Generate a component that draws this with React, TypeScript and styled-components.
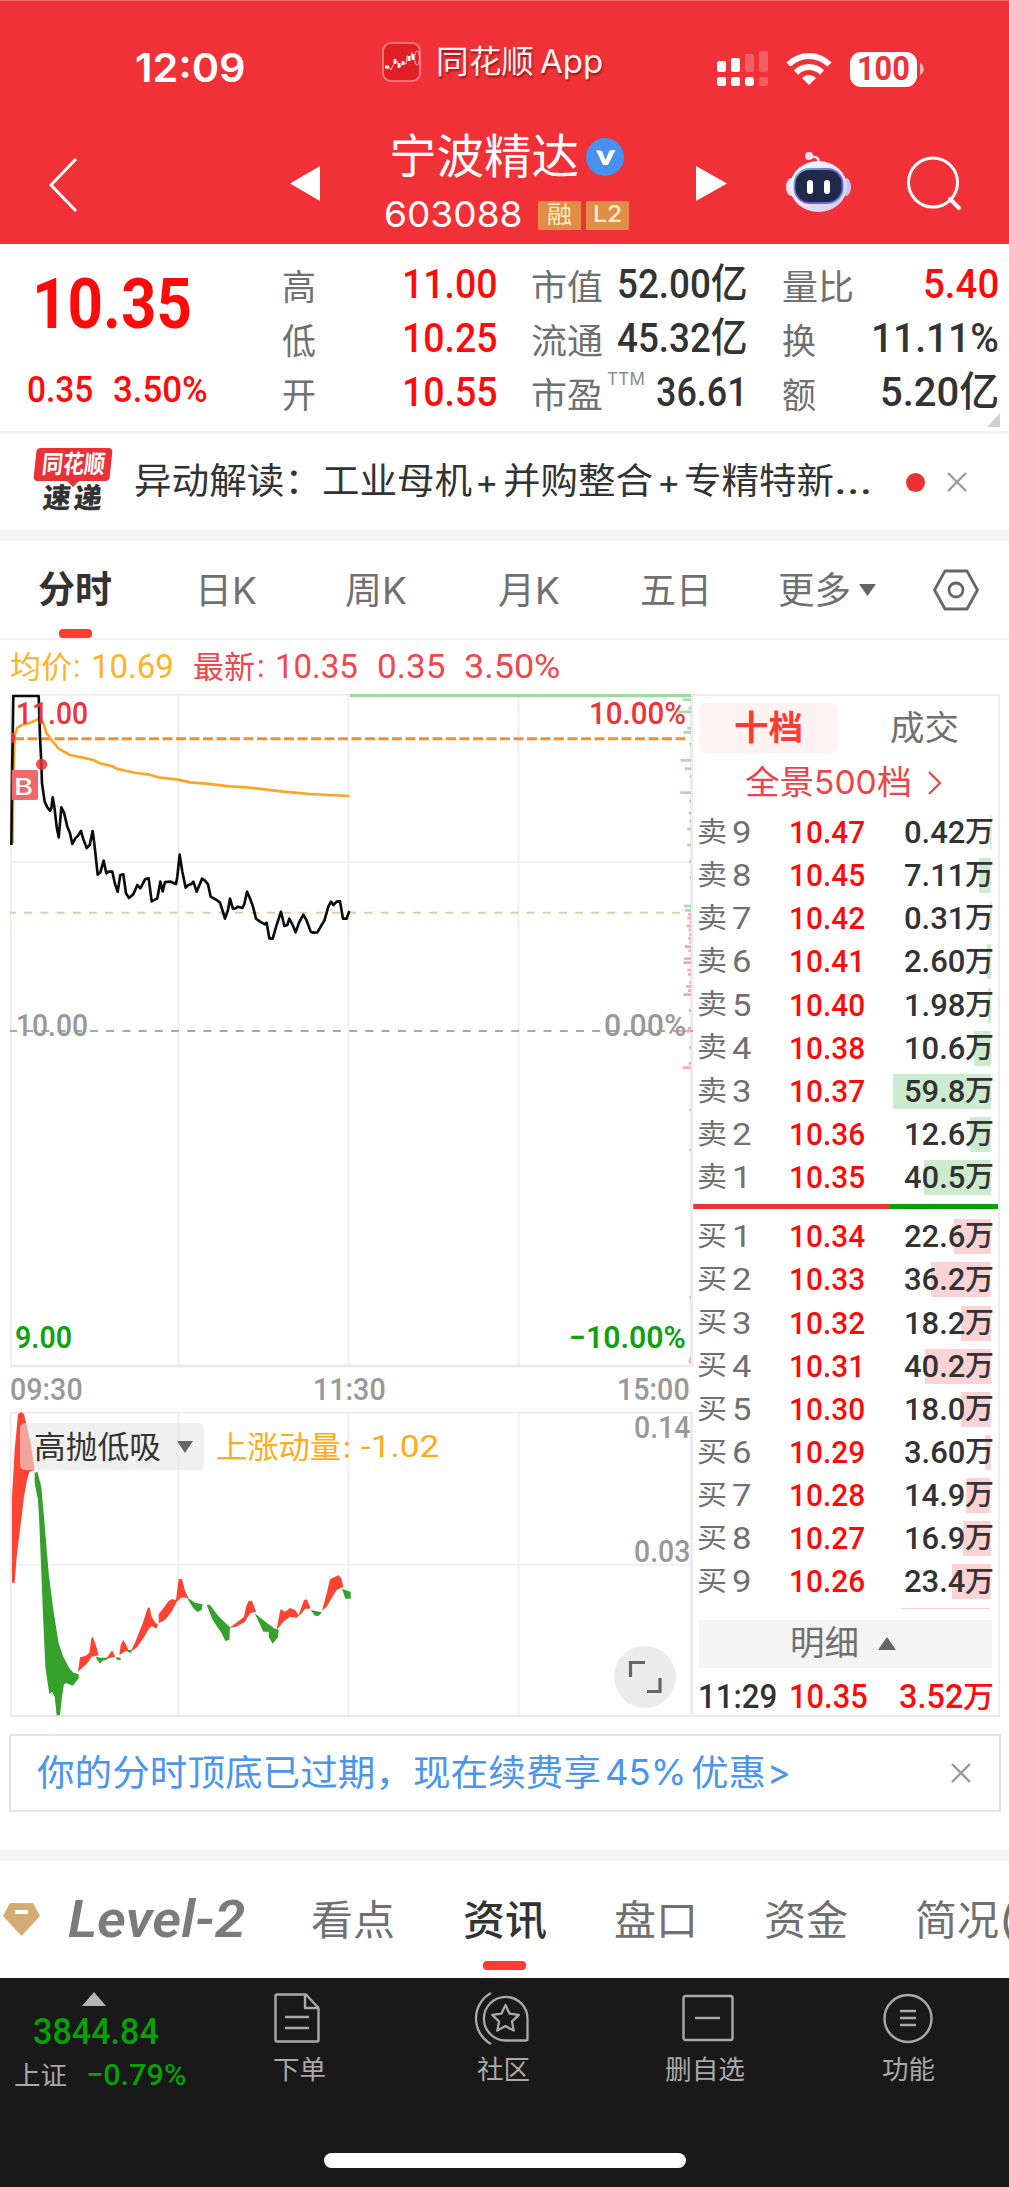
import React, { useLayoutEffect, useRef, useState } from 'react';
import styled, { createGlobalStyle, css } from 'styled-components';

const NUM = 'Roboto, "Noto Sans CJK SC", sans-serif';
const SANS = 'Inter, "Noto Sans CJK SC", sans-serif';

const RED = '#ff0a0a';
const GRAY = '#707070';
const INK = '#333333';

const Global = createGlobalStyle`
  * { box-sizing: border-box; }
  body { margin: 0; background: #fff; font-family: ${SANS}; color: ${INK}; }
`;

/* ---------- text that is condensed or widened to a column width ---------- */

const FitBox = styled.span<{ $w: number; $size: number; $color?: string; $weight?: number; $num?: boolean; $ml?: number; $dy?: number }>`
  display: block;
  flex: none;
  width: ${p => p.$w}px;
  margin-left: ${p => p.$ml ?? 0}px;
  padding-top: ${p => Math.max(0, (p.$dy ?? 0) * 2)}px;
  padding-bottom: ${p => Math.max(0, -(p.$dy ?? 0) * 2)}px;
  font-family: ${p => (p.$num ? NUM : SANS)};
  font-size: ${p => p.$size}px;
  font-weight: ${p => p.$weight ?? 400};
  color: ${p => p.$color ?? 'inherit'};
  line-height: 1.2;
  white-space: nowrap;
`;
const FitInner = styled.span`
  display: inline-block;
  transform-origin: left center;
  line-height: inherit;
  vertical-align: top;
`;

type FitProps = { w: number; size: number; color?: string; weight?: number; num?: boolean; ml?: number; dy?: number; children: React.ReactNode };

function Fit({ w, size, color, weight, num, ml, dy, children }: FitProps) {
  const ref = useRef<HTMLSpanElement>(null);
  const [scale, setScale] = useState(1);
  useLayoutEffect(() => {
    if (ref.current) setScale(w / ref.current.offsetWidth);
  }, [w, size, children]);
  return (
    <FitBox $w={w} $size={size} $color={color} $weight={weight} $num={num} $ml={ml} $dy={dy}>
      <FitInner ref={ref} style={{ transform: `scaleX(${scale})` }}>{children}</FitInner>
    </FitBox>
  );
}

/* ---------- page ---------- */

const Page = styled.div`
  width: 1009px;
  height: 2187px;
  overflow: hidden;
  background: #fff;
  display: flex;
  flex-direction: column;
`;
const Row = styled.div<{ $h?: number; $pl?: number }>`
  display: flex;
  align-items: center;
  flex: none;
  ${p => p.$h && css`height: ${p.$h}px;`}
  padding-left: ${p => p.$pl ?? 0}px;
`;
const Icon = styled.svg<{ $ml?: number; $mt?: number }>`
  display: block;
  flex: none;
  overflow: visible;
  margin-left: ${p => p.$ml ?? 0}px;
  margin-top: ${p => p.$mt ?? 0}px;
`;
const Band = styled.div<{ $h: number }>`
  flex: none;
  height: ${p => p.$h}px;
  background: #f4f4f4;
`;

/* ---------- header ---------- */

const Header = styled.header`
  flex: none;
  height: 244px;
  background: #f03138;
  color: #fff;
  border-top: 1px solid #f4686c;
`;
const StatusBar = styled(Row)`
  height: 134px;
  padding-top: 2px;
`;
const AppMark = styled(Row)`
  margin-left: 136px;
  padding-bottom: 14px;
  text-shadow: 1px 2px 2px rgba(90, 0, 0, 0.6);
`;
const Battery = styled.div`
  display: flex;
  align-items: center;
  justify-content: center;
  width: 67px;
  height: 35px;
  margin-left: 18px;
  border-radius: 11px;
  background: #fff;
`;
const NavBar = styled.div`
  display: flex;
  height: 109px;
`;
const NavIcon = styled.div<{ $w: number }>`
  flex: none;
  width: ${p => p.$w}px;
`;
const Title = styled.div`
  width: 262px;
  flex: none;
`;
const Tag = styled.span<{ $ml: number }>`
  display: flex;
  justify-content: center;
  align-items: center;
  width: 43px;
  height: 29px;
  margin-left: ${p => p.$ml}px;
  background: #e28d46;
  color: #fdeec8;
`;

function HeaderView() {
  return (
    <Header>
      <StatusBar>
        <Fit w={111} size={40} weight={600} ml={135} dy={-1}>12:09</Fit>
        <AppMark>
          <Icon width="39" height="41" viewBox="0 0 39 41">
            <rect x="1" y="1" width="37" height="38" rx="8" fill="#e01f26" stroke="#f7868a" strokeWidth="1.6" />
            <path d="M4 26l3-1 2 3 2-5 4-4 3 6 3-4 3 1 1-8 4 1 1-5" fill="none" stroke="#f9b6b6" strokeWidth="1" />
            <path d="M3 25h4M13 17v5M17 21v5M21 19v4M27 14v5M31 12v6" stroke="#fff" strokeWidth="2.8" />
            <ellipse cx="35" cy="16" rx="2.4" ry="7" fill="none" stroke="#f9b6b6" />
          </Icon>
          <Fit w={98} size={32} ml={15} color="#fff3f0">同花顺</Fit>
          <Fit w={63} size={32} ml={6} color="#fff3f0">App</Fit>
        </AppMark>
        <Icon $ml={114} width="52" height="36" viewBox="0 0 52 36" fill="#fff">
          <rect x="0" y="10" width="9" height="11" rx="2" />
          <rect x="14" y="7" width="9" height="14" rx="2" />
          <rect x="28" y="3" width="9" height="18" rx="2" opacity=".22" />
          <rect x="42" y="0" width="9" height="21" rx="2" opacity=".22" />
          <rect x="0" y="26" width="9" height="9" rx="2" />
          <rect x="14" y="26" width="9" height="9" rx="2" />
          <rect x="28" y="26" width="9" height="9" rx="3" />
          <rect x="42" y="26" width="9" height="9" rx="2" opacity=".22" />
        </Icon>
        <Icon $ml={17} width="46" height="34" viewBox="0 0 46 34" fill="none" stroke="#fff" strokeWidth="6">
          <path d="M2.500 12.500C14 1 32 1 43.500 12.500" />
          <path d="M10 20.500C17.500 13.200 28.500 13.200 36 20.500" />
          <path d="M16 26c4-4 10-4 14 0l-7 7z" fill="#fff" stroke="none" />
        </Icon>
        <Battery><Fit w={53} size={33} weight={700} num color="#f03138">100</Fit></Battery>
        <Icon $ml={3} width="4" height="12" viewBox="0 0 4 12"><path d="M0 0c5 2 5 10 0 12z" fill="#fbb9bb" /></Icon>
      </StatusBar>
      <NavBar>
        <NavIcon $w={290}>
          <Icon $ml={49} $mt={23} width="29" height="54" viewBox="0 0 29 54"><path d="M27 1L2 27l25 26" fill="none" stroke="#fff" strokeWidth="3" /></Icon>
        </NavIcon>
        <NavIcon $w={94}>
          <Icon $mt={31} width="30" height="35" viewBox="0 0 30 35"><path d="M30 0v35L0 17.500z" fill="#fff" /></Icon>
        </NavIcon>
        <Title>
          <Row $h={44} $pl={5}>
            <Fit w={190} size={47} dy={-1}>宁波精达</Fit>
            <Icon $ml={7} width="38" height="38" viewBox="0 0 38 38">
              <circle cx="19" cy="19" r="19" fill="#4792ee" />
              <path d="M10 12l6 1 3.500 9 4-9.500 6-.5-7.500 15h-5z" fill="#fff" />
            </Icon>
          </Row>
          <Row $h={72} $pl={0}>
            <Fit w={139} size={36} dy={0}>603088</Fit>
            <Tag $ml={15}><Fit w={25} size={24}>融</Fit></Tag>
            <Tag $ml={5}><Fit w={29} size={23} weight={500}>L2</Fit></Tag>
          </Row>
        </Title>
        <NavIcon $w={140}>
          <Icon $ml={50} $mt={31} width="31" height="35" viewBox="0 0 31 35"><path d="M0 0v35L31 17.500z" fill="#fff" /></Icon>
        </NavIcon>
        <NavIcon $w={121}>
          <Icon $mt={17} width="65" height="62" viewBox="0 0 65 62">
            <defs>
              <linearGradient id="shell" x1="0" y1="0" x2="1" y2="1"><stop offset="0" stopColor="#fff" /><stop offset="1" stopColor="#cfcbf0" /></linearGradient>
              <linearGradient id="rim" x1="0" y1="0" x2="1" y2="1"><stop offset="0" stopColor="#5fc0d8" /><stop offset=".6" stopColor="#8546d8" /><stop offset="1" stopColor="#5b8af0" /></linearGradient>
            </defs>
            <path d="M24 5c8-1 9 2 9 7" fill="none" stroke="#e3dcf4" strokeWidth="2.500" />
            <circle cx="23" cy="4" r="4" fill="#e9e4f8" />
            <ellipse cx="5" cy="35" rx="5" ry="9" fill="#e6e3f7" />
            <ellipse cx="60" cy="35" rx="5" ry="9" fill="#c8c5ec" />
            <ellipse cx="32.500" cy="34.500" rx="28.500" ry="25.500" fill="url(#shell)" />
            <rect x="8.500" y="17" width="48" height="34" rx="15" fill="#1f2a4a" stroke="url(#rim)" strokeWidth="1.800" />
            <rect x="21" y="28" width="6" height="14" rx="3" fill="#fff" />
            <rect x="38" y="28" width="6" height="14" rx="3" fill="#fff" />
          </Icon>
        </NavIcon>
        <Icon $mt={21} width="56" height="56" viewBox="0 0 56 56" fill="none" stroke="#fff" strokeWidth="3">
          <circle cx="26" cy="26.500" r="24.500" /><path d="M43 43l9 9" strokeWidth="4" strokeLinecap="round" />
        </Icon>
      </NavBar>
    </Header>
  );
}

/* ---------- quote ---------- */

const Quote = styled.section`
  flex: none;
  display: flex;
  height: 190px;
  border-bottom: 3px solid #f3f3f3;
`;
const PriceCol = styled.div`
  width: 282px;
  padding: 19px 0 0 27px;
`;
const StatCol = styled.div<{ $w: number; $mr: number }>`
  flex: none;
  width: ${p => p.$w}px;
  margin-right: ${p => p.$mr}px;
  padding-top: 15px;
`;
const StatRow = styled.div`
  display: flex;
  justify-content: space-between;
  align-items: center;
  height: 54px;
`;
const Superscript = styled.span`
  flex: 1;
  align-self: flex-start;
  padding: 4px 0 0 4px;
  font-size: 17px;
  line-height: 17px;
  color: #8a8a8a;
  letter-spacing: 0.3px;
`;
const Corner = styled.div`
  align-self: flex-end;
  margin: 0 0 4px -12px;
  border-left: 13px solid transparent;
  border-bottom: 14px solid #cfcfcf;
`;

type Stat = { label: string; lw: number; value: string; vw: number; color?: string; sup?: string };
const statCols: { w: number; mr: number; rows: Stat[] }[] = [
  { w: 216, mr: 33, rows: [
    { label: '高', lw: 34, value: '11.00', vw: 96, color: RED },
    { label: '低', lw: 34, value: '10.25', vw: 96, color: RED },
    { label: '开', lw: 34, value: '10.55', vw: 96, color: RED } ] },
  { w: 217, mr: 34, rows: [
    { label: '市值', lw: 72, value: '52.00亿', vw: 131 },
    { label: '流通', lw: 72, value: '45.32亿', vw: 131 },
    { label: '市盈', lw: 72, value: '36.61', vw: 92, sup: 'TTM' } ] },
  { w: 217, mr: 0, rows: [
    { label: '量比', lw: 72, value: '5.40', vw: 76, color: RED },
    { label: '换', lw: 34, value: '11.11%', vw: 128 },
    { label: '额', lw: 34, value: '5.20亿', vw: 119 } ] },
];

function QuoteView() {
  return (
    <Quote>
      <PriceCol>
        <Row $h={82} $pl={5}><Fit w={160} size={70} weight={700} num color={RED}>10.35</Fit></Row>
        <Row $h={90}>
          <Fit w={66} size={37} weight={500} num color={RED}>0.35</Fit>
          <Fit w={95} size={37} weight={500} num color={RED} ml={20}>3.50%</Fit>
        </Row>
      </PriceCol>
      {statCols.map((c, i) => (
        <StatCol key={i} $w={c.w} $mr={c.mr}>
          {c.rows.map(r => (
            <StatRow key={r.label}>
              <Fit w={r.lw} size={35} color={GRAY} dy={1}>{r.label}</Fit>
              {r.sup && <Superscript>{r.sup}</Superscript>}
              <Fit w={r.vw} size={41} weight={500} num color={r.color ?? INK} dy={-1}>{r.value}</Fit>
            </StatRow>
          ))}
        </StatCol>
      ))}
      <Corner />
    </Quote>
  );
}

/* ---------- news ---------- */

const News = styled(Row)`
  height: 96px;
`;
const Badge = styled.div`
  display: flex;
  flex-direction: column;
  align-items: center;
  width: 80px;
  height: 68px;
  margin: 0 21px 0 33px;
`;
const BadgeTop = styled.div`
  display: flex;
  justify-content: center;
  width: 76px;
  height: 34px;
  padding-top: 1px;
  border-radius: 4px;
  background: #ea3135;
  transform: skewX(-6deg);
`;
const BadgeTip = styled.div`
  border: 6px solid transparent;
  border-bottom: 0;
  border-top-color: #ea3135;
`;
const BadgeBottom = styled.div`
  display: flex;
  gap: 3px;
  margin: -5px 0 0 -2px;
  transform: skewX(-6deg);
`;
const Dot = styled.i`
  flex: none;
  width: 19px;
  height: 19px;
  margin-left: 34px;
  border-radius: 50%;
  background: #ee3135;
`;

const Cross = ({ ml }: { ml: number }) => (
  <Icon $ml={ml} width="20" height="20" viewBox="0 0 20 20"><path d="M1 1l18 18M19 1L1 19" stroke="#999" strokeWidth="2.400" /></Icon>
);

function NewsView() {
  return (
    <News>
      <Badge>
        <BadgeTop><Fit w={63} size={25} weight={700} color="#fff">同花顺</Fit></BadgeTop>
        <BadgeTip />
        <BadgeBottom>
          <Fit w={28} size={28} weight={900}>速</Fit>
          <Fit w={28} size={28} weight={900}>递</Fit>
        </BadgeBottom>
      </Badge>
      <Fit w={188} size={36}>异动解读：</Fit>
      <Fit w={150} size={36}>工业母机</Fit>
      <Fit w={24} size={34} ml={3}>+</Fit>
      <Fit w={150} size={36} ml={4}>并购整合</Fit>
      <Fit w={24} size={34} ml={4}>+</Fit>
      <Fit w={150} size={36} ml={3}>专精特新</Fit>
      <Fit w={38} size={36}>...</Fit>
      <Dot />
      <Cross ml={22} />
    </News>
  );
}

/* ---------- period tabs ---------- */

const Tabs = styled.nav<{ $h: number; $cols: string; $border?: boolean }>`
  flex: none;
  display: grid;
  grid-template-columns: ${p => p.$cols};
  height: ${p => p.$h}px;
  ${p => p.$border && css`border-bottom: 2px solid #f1f1f1;`}
`;
const Tab = styled.div<{ $top: number }>`
  display: flex;
  padding-top: ${p => p.$top}px;
`;
const ActiveTab = styled.div<{ $top: number }>`
  display: flex;
  flex-direction: column;
  justify-content: space-between;
  padding-top: ${p => p.$top}px;
`;
const Underline = styled.i<{ $ml: number; $w: number; $mb?: number }>`
  width: ${p => p.$w}px;
  height: 9px;
  margin: 0 0 ${p => p.$mb ?? 0}px ${p => p.$ml}px;
  border-radius: 4px;
  background: #ff3b32;
`;

function PeriodTabs() {
  return (
    <Tabs $h={99} $cols="195px 150px 153px 142px 138px 155px 1fr" $border>
      <ActiveTab $top={27}>
        <Fit w={74} size={37} weight={700} ml={38}>分时</Fit>
        <Underline $ml={59} $w={33} />
      </ActiveTab>
      {['日K', '周K', '月K'].map(t => <Tab key={t} $top={28}><Fit w={62} size={37} color={GRAY}>{t}</Fit></Tab>)}
      <Tab $top={28}><Fit w={72} size={37} color={GRAY}>五日</Fit></Tab>
      <Tab $top={28}>
        <Fit w={73} size={37} color={GRAY}>更多</Fit>
        <Icon $ml={8} $mt={15} width="17" height="12" viewBox="0 0 17 12"><path d="M0 0h17L8.500 12z" fill="#666" /></Icon>
      </Tab>
      <Tab $top={28}>
        <Icon width="46" height="42" viewBox="0 0 46 42" fill="none" stroke="#666" strokeWidth="2.800">
          <path d="M12 2h22l10.500 19L34 40H12L1.500 21z" strokeLinejoin="round" /><circle cx="23" cy="21" r="7" />
        </Icon>
      </Tab>
    </Tabs>
  );
}

/* ---------- chart column ---------- */

const Summary = styled(Row)`
  height: 54px;
  padding-left: 10px;
  color: #f0474c;
`;
const Market = styled.main`
  flex: none;
  display: flex;
  height: 1023px;
  padding-left: 10px;
`;
const ChartCol = styled.div`
  width: 683px;
  flex: none;
`;
const Plot = styled.div<{ $h: number }>`
  position: relative;
  height: ${p => p.$h}px;
`;
const PlotText = styled.div<{ $x?: number; $right?: number; $y: number }>`
  position: absolute;
  top: ${p => p.$y}px;
  ${p => (p.$right !== undefined ? css`right: ${p.$right}px;` : css`left: ${p.$x}px;`)}
`;
const Axis = styled.div`
  display: flex;
  justify-content: space-between;
  align-items: center;
  height: 45px;
  padding: 0 3px 0 0;
  color: #999;
`;
const Chip = styled.div`
  position: absolute;
  left: 10px;
  top: 11px;
  display: flex;
  align-items: center;
  width: 184px;
  height: 47px;
  padding-left: 14px;
  border-radius: 5px;
  background: rgba(230, 230, 230, 0.6);
`;
const Expand = styled.div`
  position: absolute;
  right: 17px;
  top: 234px;
  display: flex;
  align-items: center;
  justify-content: center;
  width: 62px;
  height: 62px;
  border-radius: 50%;
  background: #ececec;
`;

const pricePts = '34,495 36,300 40,48 116,48 120,170 124,250 126,310 134,365 142,382 150,392 154,385 158,352 163,380 170,440 176,472 180,430 184,382 192,398 202,440 210,460 217,492 226,475 234,467 243,453 250,478 260,504 269,495 278,453 284,500 293,584 301,577 311,542 319,580 326,575 337,575 345,612 353,635 361,585 370,583 378,640 387,654 400,643 412,615 421,625 436,597 446,595 455,664 472,655 481,605 488,634 495,606 512,605 528,612 532,590 539,524 547,575 557,623 565,615 573,613 580,605 590,635 606,596 615,602 624,613 632,650 650,660 660,668 667,690 675,716 684,690 690,656 699,687 707,685 714,680 727,684 733,672 741,635 750,655 759,680 768,716 780,725 795,733 800,728 808,775 818,776 830,735 843,695 853,738 862,735 868,716 878,735 887,757 897,728 910,704 920,722 932,755 940,758 952,757 965,735 973,722 985,680 993,665 1000,675 1010,665 1020,664 1029,716 1040,716 1048,693';
const averagePts = '38,490 40,300 44,165 52,143 66,135 90,128 110,120 120,112 130,130 140,160 155,180 175,205 210,225 245,232 280,240 300,250 335,258 350,266 380,273 410,279 445,283 480,293 535,299 570,307 620,311 690,319 740,322 800,329 850,335 930,342 1048,348';

const asks: [number, number][] = [[59, 1028], [85, 1045], [96, 1015], [145, 1042], [157, 1030], [193, 1048], [241, 1022], [266, 1034], [290, 1049], [338, 1021], [363, 1047], [399, 1046], [424, 1049], [447, 1042], [495, 1042], [545, 1047], [593, 1050], [678, 1032], [691, 1034]];
const bids: [number, number][] = [[703, 1045], [714, 1042], [726, 1048], [738, 1040], [750, 1046], [763, 1048], [775, 1045], [787, 1048], [800, 1034], [812, 1045], [836, 1032], [848, 1030], [870, 1042], [883, 1044], [907, 1048], [919, 1038], [932, 1044], [944, 1030], [992, 1046], [1045, 1044], [1053, 1015], [1102, 1048], [1150, 1046], [1163, 1028], [1290, 1049], [1410, 1049], [1852, 1049], [2036, 1048], [2045, 1046]];

const rising = [
  '36,878 36,620 44,480 54,372 64,366 72,372 80,405 94,470 104,540 88,545 80,575 72,620 60,720 50,800 44,878',
  '234,1145 240,1102 256,1098 268,1088 274,1045 278,1040 286,1060 292,1080 296,1096 275,1100 262,1120',
  '318,1108 330,1090 336,1081 346,1100 330,1103',
  '358,1095 362,1065 370,1049 380,1068 386,1082 372,1086',
  '392,1084 404,1060 416,1030 428,1000 436,975 444,952 450,955 454,978 464,995 474,1005 470,1016 455,1008 446,1018 430,1045 412,1070 400,1080',
  '476,1000 476,972 490,955 504,935 515,927 528,930 536,866 546,868 556,905 566,925 545,922 530,935 515,965 495,990',
  '688,1014 712,996 732,980 738,950 746,932 756,932 768,965 750,970 735,995 708,1010',
  '830,1020 836,985 842,957 855,965 870,954 885,960 896,975 912,930 920,928 932,955 915,957 905,970 890,983 870,980 850,995',
  '966,962 980,910 990,868 1005,860 1016,856 1024,865 1030,890 1010,900 995,925 980,950',
];
const falling = [
  '104,548 112,545 124,590 132,680 146,850 160,960 176,1060 190,1100 208,1135 220,1148 236,1152 236,1165 218,1187 200,1180 192,1182 186,1220 180,1276 170,1276 164,1220 156,1205 148,1213 136,1130 128,950 118,700 114,630 104,580',
  '288,1100 300,1103 328,1103 318,1110 308,1112 300,1121 290,1108',
  '348,1102 362,1103 362,1110 350,1109',
  '382,1080 396,1080 394,1088 384,1087',
  '560,922 585,938 608,943 605,960 592,966 580,955',
  '620,944 630,945 655,978 690,1012 688,1050 676,1053 665,1030 650,1008 638,990',
  '764,970 800,998 822,1015 836,1020 834,1042 818,1061 806,1040 806,1025 790,1025',
  '932,960 966,967 955,978 945,977',
  '1026,896 1052,906 1052,926 1036,926',
];

function PricePlot() {
  return (
    <Plot $h={673}>
      <Icon width="683" height="673" viewBox="0 0 683 673" fill="none">
        <path d="M168.500 0v673M338.500 0v673M508.500 0v673M0 168h683" stroke="#f0f0f0" strokeWidth="2" />
        <path d="M.75 0v673M0 .75h683" stroke="#ebebeb" strokeWidth="1.500" />
        <path d="M0 672h683" stroke="#e8e8e8" strokeWidth="2.500" />
        <path d="M681.500 0v673" stroke="#ececec" strokeWidth="3.500" />
        <path d="M0 337h683" stroke="#a8a8a8" strokeWidth="1.800" strokeDasharray="8 8.200" strokeDashoffset="1" />
        <path d="M0 218.700h672" stroke="#e6cba6" strokeWidth="1.900" strokeDasharray="8 8.200" strokeDashoffset="2" />
        <path d="M4 44.800h674" stroke="#fb8c2c" strokeWidth="3" strokeDasharray="10 3.500" />
        <path d="M340 1.700h341" stroke="#9fdaa2" strokeWidth="3.200" />
        <g transform="translate(330 -14) scale(.33333)" strokeWidth="8">
          {asks.map(([y, x]) => <path key={y} d={`M${x} ${y}H1053`} stroke="#a5dca8" />)}
          {bids.map(([y, x]) => <path key={y} d={`M${x} ${y}H1053`} stroke="#f9a9ab" />)}
        </g>
        <g transform="translate(-10 -14) scale(.33333)" strokeLinejoin="round">
          <polyline points={averagePts} stroke="#fda326" strokeWidth="8" />
          <polyline points={pricePts} stroke="#0c0c0c" strokeWidth="8" />
          <path d="M35 270h74q5 0 5 5v79q0 6-6 6H35z" fill="#f0686a" />
          <circle cx="125" cy="253" r="17" fill="#e8343a" opacity=".85" />
          <path d="M34 155q12 2 12 18t-12 16z" fill="#e8343a" />
        </g>
      </Icon>
      <PlotText $x={4} $y={80}><Fit w={19} size={23} weight={500} color="#fff">B</Fit></PlotText>
      <PlotText $x={6} $y={1}><Fit w={72} size={31} weight={500} num color="#ee3439">11.00</Fit></PlotText>
      <PlotText $right={7} $y={1}><Fit w={97} size={31} weight={500} num color="#ee3439">10.00%</Fit></PlotText>
      <PlotText $x={6} $y={313}><Fit w={72} size={31} weight={500} num color="#999">10.00</Fit></PlotText>
      <PlotText $right={7} $y={313}><Fit w={82} size={31} weight={500} num color="#999">0.00%</Fit></PlotText>
      <PlotText $x={5} $y={625}><Fit w={57} size={31} weight={600} num color="#12a012">9.00</Fit></PlotText>
      <PlotText $right={7} $y={625}><Fit w={117} size={31} weight={600} num color="#12a012">−10.00%</Fit></PlotText>
    </Plot>
  );
}

function MomentumPlot() {
  return (
    <Plot $h={305}>
      <Icon width="683" height="305" viewBox="0 0 683 305" fill="none">
        <path d="M168.500 0v305M338.500 0v305M508.500 0v305M0 152.700h683" stroke="#f0f0f0" strokeWidth="2" />
        <path d="M.75 0v305M0 .75h683" stroke="#ebebeb" strokeWidth="1.500" />
        <path d="M0 304h683" stroke="#e8e8e8" strokeWidth="2" />
        <path d="M681.500 0v305" stroke="#ececec" strokeWidth="3.500" />
        <g transform="translate(-10 -122) scale(.33333)">
          {rising.map(p => <polygon key={p} points={p} fill="#ff4433" />)}
          {falling.map(p => <polygon key={p} points={p} fill="#35a02b" />)}
        </g>
      </Icon>
      <Chip>
        <Fit w={127} size={31} color={INK}>高抛低吸</Fit>
        <Icon $ml={16} width="16" height="12" viewBox="0 0 16 12"><path d="M0 0h16L8 12z" fill="#666" /></Icon>
      </Chip>
      <PlotText $x={206} $y={15}><Row>
        <Fit w={125} size={31} color="#fdab1e">上涨动量</Fit>
        <Fit w={8} size={31} ml={2} color="#fdab1e">:</Fit>
        <Fit w={78} size={32} ml={10} num color="#fdab1e">-1.02</Fit>
      </Row></PlotText>
      <PlotText $right={3} $y={-3}><Fit w={56} size={31} weight={500} num color="#999">0.14</Fit></PlotText>
      <PlotText $right={3} $y={121}><Fit w={56} size={31} weight={500} num color="#999">0.03</Fit></PlotText>
      <Expand>
        <Icon width="34" height="34" viewBox="0 0 34 34" fill="none" stroke="#666" strokeWidth="3.200"><path d="M2.500 17V2.500H17M19 31.500h13V18" /></Icon>
      </Expand>
    </Plot>
  );
}

/* ---------- order book ---------- */

const Book = styled.aside`
  flex: none;
  width: 307px;
  height: 1023px;
  border-top: 2px solid #ededed;
  border-right: 2px solid #ededed;
  border-bottom: 2px solid #e8e8e8;
`;
const BookTabs = styled.div`
  display: flex;
  height: 58px;
  padding: 7px 0 0 6px;
`;
const BookTab = styled.div<{ $active?: boolean }>`
  display: flex;
  flex: none;
  align-items: center;
  justify-content: center;
  width: ${p => (p.$active ? 139 : 160)}px;
  height: 50px;
  padding-left: ${p => (p.$active ? 0 : 12)}px;
  border-radius: 6px;
  background: ${p => (p.$active ? '#fff2f2' : 'none')};
`;
const Levels = styled.div<{ $mt: number }>`
  margin-top: ${p => p.$mt}px;
`;
const Level = styled.div`
  display: grid;
  grid-template-columns: 35px 57px 1fr 105px;
  align-items: center;
  height: 43.15px;
  padding-left: 4px;
`;
const Volume = styled.div<{ $bar: number; $tint: string }>`
  height: 35px;
  display: flex;
  align-items: center;
  justify-content: flex-end;
  padding-right: 4px;
  background: linear-gradient(${p => p.$tint}, ${p => p.$tint}) no-repeat right 7px top 0 / ${p => p.$bar}px 35px;
`;
const Ratio = styled.div`
  height: 5px;
  margin-top: 5px;
  background: linear-gradient(90deg, #ef3438 197px, #06a006 197px);
`;
const Leftover = styled.div`
  height: 1px;
  width: 89px;
  margin: 4px 0 0 208px;
  background: #fbd3d3;
`;
const Detail = styled.div`
  display: flex;
  align-items: center;
  width: 293px;
  height: 48px;
  margin: 11px 0 0 6px;
  padding-left: 91px;
  background: #f4f4f4;
`;

const sell: [number, string, string][] = [[9, '10.47', '0.42'], [8, '10.45', '7.11'], [7, '10.42', '0.31'], [6, '10.41', '2.60'], [5, '10.40', '1.98'], [4, '10.38', '10.6'], [3, '10.37', '59.8'], [2, '10.36', '12.6'], [1, '10.35', '40.5']];
const buy: [number, string, string][] = [[1, '10.34', '22.6'], [2, '10.33', '36.2'], [3, '10.32', '18.2'], [4, '10.31', '40.2'], [5, '10.30', '18.0'], [6, '10.29', '3.60'], [7, '10.28', '14.9'], [8, '10.27', '16.9'], [9, '10.26', '23.4']];

function LevelRow({ side, n, price, vol, tint }: { side: string; n: number; price: string; vol: string; tint: string }) {
  return (
    <Level>
      <Fit w={30} size={28} color={GRAY}>{side}</Fit>
      <Fit w={19} size={31} num color={GRAY}>{n}</Fit>
      <Fit w={76} size={31} weight={500} num color={RED}>{price}</Fit>
      <Volume $bar={Math.max(1.5, parseFloat(vol) * 1.65)} $tint={tint}>
        <Fit w={61} size={31} weight={500} num>{vol}</Fit>
        <Fit w={29} size={29} weight={500}>万</Fit>
      </Volume>
    </Level>
  );
}

function BookView() {
  return (
    <Book>
      <BookTabs>
        <BookTab $active><Fit w={69} size={34} weight={700} color="#ff3b32">十档</Fit></BookTab>
        <BookTab><Fit w={69} size={34} color={GRAY}>成交</Fit></BookTab>
      </BookTabs>
      <Row $h={58} $pl={52}>
        <Fit w={69} size={33} color="#ec4549">全景</Fit>
        <Fit w={63} size={33} color="#ec4549">500</Fit>
        <Fit w={35} size={33} color="#ec4549">档</Fit>
        <Icon $ml={16} width="13" height="24" viewBox="0 0 13 24"><path d="M1 1l11 11L1 23" fill="none" stroke="#ec4549" strokeWidth="2.200" /></Icon>
      </Row>
      <Levels $mt={-1}>{sell.map(([n, p, v]) => <LevelRow key={n} side="卖" n={n} price={p} vol={v} tint="#cdebce" />)}</Levels>
      <Ratio />
      <Levels $mt={6}>{buy.map(([n, p, v]) => <LevelRow key={n} side="买" n={n} price={p} vol={v} tint="#fbd3d5" />)}</Levels>
      <Leftover />
      <Detail>
        <Fit w={69} size={34} color={GRAY}>明细</Fit>
        <Icon $ml={19} width="18" height="13" viewBox="0 0 18 13"><path d="M0 13h18L9 0z" fill="#666" /></Icon>
      </Detail>
      <Row $h={57} $pl={5}>
        <Fit w={79} size={34} weight={500} num>11:29</Fit>
        <Fit w={79} size={34} weight={500} num color={RED} ml={12}>10.35</Fit>
        <Fit w={64} size={34} weight={500} num color={RED} ml={31}>3.52</Fit>
        <Fit w={31} size={30} weight={500} color={RED}>万</Fit>
      </Row>
    </Book>
  );
}

/* ---------- lower area ---------- */

const Promo = styled(Row)`
  width: 992px;
  height: 78px;
  margin: 17px 0 38px 9px;
  padding-left: 26px;
  border: 2px solid #e4e4e4;
  color: #4a95ee;
`;
const Italic = styled.div`
  font-style: italic;
`;

function PromoView() {
  return (
    <Promo>
      <Fit w={564} size={36} dy={1}>你的分时顶底已过期，现在续费享</Fit>
      <Fit w={82} size={36} ml={4}>45%</Fit>
      <Fit w={75} size={36} ml={4} dy={1}>优惠</Fit>
      <Fit w={24} size={36} ml={1}>&gt;</Fit>
      <Cross ml={160} />
    </Promo>
  );
}

function SectionTabs() {
  return (
    <Tabs $h={117} $cols="68px 243px 152px 151px 150px 151px 1fr">
      <Tab $top={42}>
        <Icon $ml={3} width="37" height="33" viewBox="0 0 37 33">
          <path d="M7 0h23l7 13-18.500 20L0 13z" fill="#d3ab73" /><path d="M12 9h13" stroke="#fff" strokeWidth="4" />
        </Icon>
      </Tab>
      <Tab $top={28}><Italic><Fit w={178} size={52} weight={600} num color="#7b7b7b">Level-2</Fit></Italic></Tab>
      <Tab $top={35}><Fit w={84} size={41} color={GRAY}>看点</Fit></Tab>
      <ActiveTab $top={35}>
        <Fit w={84} size={41} weight={500}>资讯</Fit>
        <Underline $ml={20} $w={43} $mb={8} />
      </ActiveTab>
      <Tab $top={35}><Fit w={84} size={41} color={GRAY}>盘口</Fit></Tab>
      <Tab $top={35}><Fit w={84} size={41} color={GRAY}>资金</Fit></Tab>
      <Tab $top={35}><Fit w={84} size={41} color={GRAY}>简况</Fit><Fit w={16} size={41} color={GRAY}>(</Fit></Tab>
    </Tabs>
  );
}

const Footer = styled.footer`
  flex: 1;
  display: flex;
  flex-direction: column;
  justify-content: space-between;
  align-items: center;
  padding-bottom: 19px;
  background: #191919;
  color: #a9a9a9;
`;
const FooterGrid = styled.div`
  display: grid;
  grid-template-columns: 200px 198px 211px 191px 1fr;
  width: 1009px;
`;
const IndexCell = styled.div`
  padding-top: 14px;
`;
const FooterItem = styled.div<{ $pr?: number; $pl?: number }>`
  display: flex;
  flex-direction: column;
  align-items: center;
  padding: 15px ${p => p.$pr ?? 0}px 0 ${p => p.$pl ?? 0}px;
  gap: 11px;
`;
const HomeBar = styled.i`
  width: 362px;
  height: 15px;
  border-radius: 8px;
  background: #fff;
`;

function FooterView() {
  return (
    <Footer>
      <FooterGrid>
        <IndexCell>
          <Icon $ml={82} width="24" height="14" viewBox="0 0 24 14"><path d="M0 14h24L12 0z" fill="#b5b5b5" /></Icon>
          <Row $h={54} $pl={33}><Fit w={126} size={36} weight={500} num color="#08a008">3844.84</Fit></Row>
          <Row $h={32} $pl={14}>
            <Fit w={53} size={26}>上证</Fit>
            <Fit w={100} size={30} weight={500} num color="#08a008" ml={19} dy={-1}>−0.79%</Fit>
          </Row>
        </IndexCell>
        <FooterItem>
          <Icon $ml={-5} width="46" height="50" viewBox="0 0 46 50" fill="none" stroke="#a9a9a9" strokeWidth="2.400">
            <path d="M1.500 3q0-1.500 1.500-1.500h29L44.500 15v32q0 1.500-1.500 1.500H3q-1.500 0-1.500-1.500zM31 1.500V15h13.500M11 24h24M11 35h24" strokeLinejoin="round" />
          </Icon>
          <Fit w={53} size={26}>下单</Fit>
        </FooterItem>
        <FooterItem>
          <Icon $ml={-4} width="54" height="50" viewBox="0 0 54 50" fill="none" stroke="#a9a9a9" strokeWidth="2.300">
            <path d="M52.500 26v20q0 1.500-1.500 1.500H31A21.800 21.800 0 1 1 52.500 26zM16 0C-4 11-4 40 16 51" strokeLinejoin="round" />
            <path d="M30.500 12l4 8.600 9.300 1.200-6.800 6.500 1.700 9.300-8.200-4.500-8.200 4.500 1.700-9.300-6.800-6.500 9.300-1.200z" strokeLinejoin="round" />
          </Icon>
          <Fit w={53} size={26}>社区</Fit>
        </FooterItem>
        <FooterItem>
          <Icon $ml={6} width="52" height="50" viewBox="0 0 52 50" fill="none" stroke="#a9a9a9" strokeWidth="2.400">
            <rect x="1.500" y="3" width="49" height="44" rx="2" /><path d="M13 25h25" />
          </Icon>
          <Fit w={80} size={26}>删自选</Fit>
        </FooterItem>
        <FooterItem $pl={7}>
          <Icon width="50" height="50" viewBox="0 0 50 50" fill="none" stroke="#a9a9a9" strokeWidth="2.400">
            <circle cx="25" cy="25.500" r="23.500" /><path d="M17 18h16M17 25h16M17 32h16" />
          </Icon>
          <Fit w={53} size={26}>功能</Fit>
        </FooterItem>
      </FooterGrid>
      <HomeBar />
    </Footer>
  );
}

export default function App() {
  return (
    <Page>
      <Global />
      <HeaderView />
      <QuoteView />
      <NewsView />
      <Band $h={11} />
      <PeriodTabs />
      <Summary>
        <Fit w={62} size={31} color="#fdb32a">均价</Fit>
        <Fit w={8} size={31} ml={1} num color="#fdb32a">:</Fit>
        <Fit w={83} size={33} ml={10} num color="#fdb32a">10.69</Fit>
        <Fit w={62} size={31} ml={19}>最新</Fit>
        <Fit w={8} size={31} ml={2} num>:</Fit>
        <Fit w={83} size={33} ml={10} num>10.35</Fit>
        <Fit w={68} size={33} ml={19} num>0.35</Fit>
        <Fit w={97} size={33} ml={19} num>3.50%</Fit>
      </Summary>
      <Market>
        <ChartCol>
          <PricePlot />
          <Axis>
            <Fit w={73} size={31} weight={500} num>09:30</Fit>
            <Fit w={73} size={31} weight={500} num ml={-2}>11:30</Fit>
            <Fit w={73} size={31} weight={500} num>15:00</Fit>
          </Axis>
          <MomentumPlot />
        </ChartCol>
        <BookView />
      </Market>
      <PromoView />
      <Band $h={11} />
      <SectionTabs />
      <FooterView />
    </Page>
  );
}
